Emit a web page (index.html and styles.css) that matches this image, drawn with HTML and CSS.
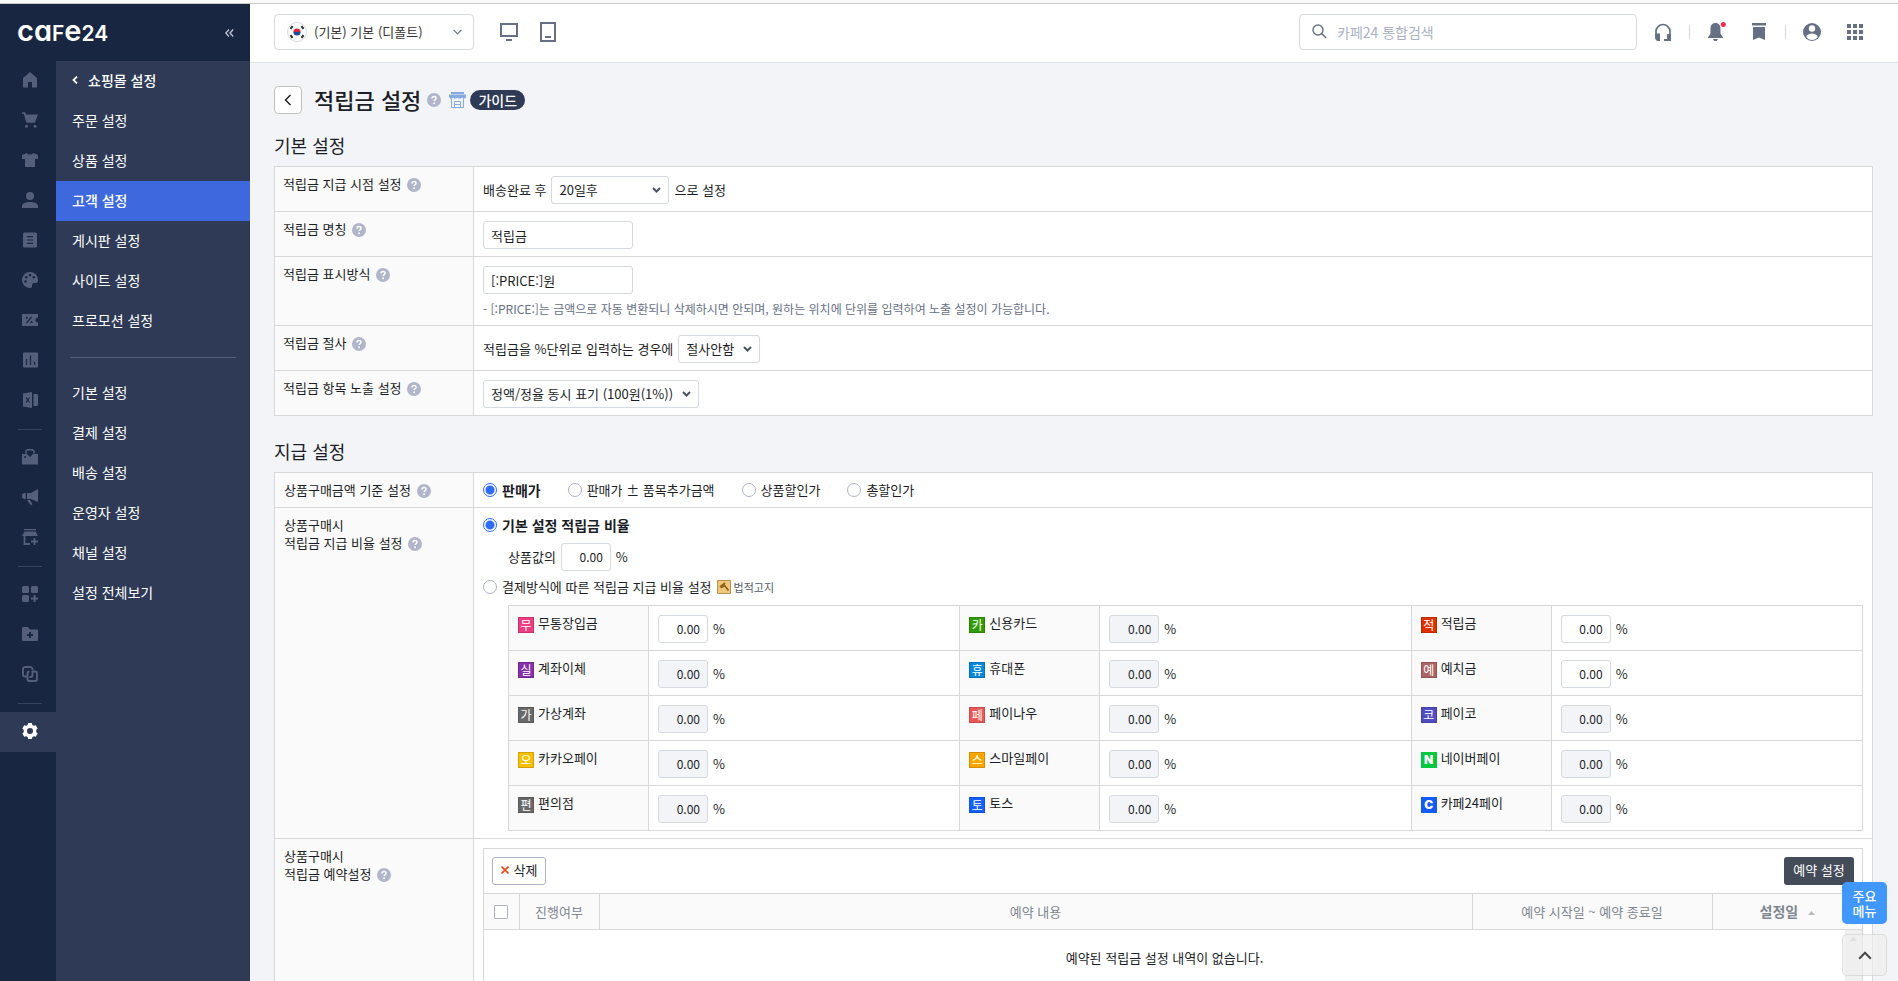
FILE: index.html
```
<!DOCTYPE html>
<html lang="ko">
<head>
<meta charset="utf-8">
<title>적립금 설정</title>
<link rel="stylesheet" href="styles.css">
</head>
<body>
<svg class="sprite" aria-hidden="true">
  <symbol id="help" viewBox="0 0 14 14"><circle cx="7" cy="7" r="7" fill="#b0b5ca"/><path d="M5 5.6C5 4.3 5.9 3.6 7 3.6s2 .7 2 1.8c0 1.3-1.9 1.4-1.9 2.7" fill="none" stroke="#fff" stroke-width="1.5"/><circle cx="7.1" cy="10.3" r=".95" fill="#fff"/></symbol>
</svg>
<div class="shell">
  <aside class="sidebar">
    <div class="brand">
      <a class="logo" href="#">ca<span class="logo-small">F</span>e<span class="logo-small">24</span></a>
      <button class="collapse" aria-label="메뉴 접기"><svg width="9" height="8" viewBox="0 0 9 8"><path d="M4 .5.8 4 4 7.500M8.200.5 5 4l3.200 3.500" fill="none" stroke="#c3c9d6" stroke-width="1.300"/></svg></button>
    </div>
    <div class="side-body">
      <nav class="rail" aria-label="주 메뉴">
        <a href="#" aria-label="홈"><svg viewBox="0 0 16 16"><path d="M8 0 1 6v9.500h5V10h4v5.500h5V6z"/></svg></a>
        <a href="#" aria-label="주문"><svg viewBox="0 0 16 16"><path d="M0 .3h3.200l.9 2.200H16L13.200 10l-.6.800H4.800L4 9.500 1.800 1.800H0z"/><circle cx="4.500" cy="14.300" r="1.500"/><circle cx="13" cy="14.300" r="1.500"/></svg></a>
        <a href="#" aria-label="상품"><svg viewBox="0 0 16 16"><path d="M5 1c.5 2 5.500 2 6 0l5 2v4h-3v8H3V7H0V3z"/></svg></a>
        <a href="#" aria-label="고객"><svg viewBox="0 0 16 16"><circle cx="8" cy="4" r="4"/><path d="M0 16v-2c0-5.300 16-5.300 16 0v2z"/></svg></a>
        <a href="#" aria-label="게시판"><svg viewBox="0 0 16 16"><path fill-rule="evenodd" d="M2.500.5h11A1.500 1.500 0 0 1 15 2v12a1.500 1.500 0 0 1-1.500 1.500h-11A1.500 1.500 0 0 1 1 14V2A1.500 1.500 0 0 1 2.500.5zM5 4v1.200h6V4zm0 3.400v1.200h6V7.400zm0 3.400V12h6v-1.200z"/></svg></a>
        <a href="#" aria-label="디자인"><svg viewBox="0 0 16 16"><path d="M8 0a8 8 0 1 0 0 16c1.500 0 2.200-1 2-2.300-.2-1.700.6-2.700 2.300-2.700H14c1.300 0 2-1.200 2-3A8 8 0 0 0 8 0z"/><g class="cut"><circle cx="3.500" cy="9.500" r="1.300"/><circle cx="4.300" cy="5.200" r="1.300"/><circle cx="8" cy="3.100" r="1.300"/><circle cx="11.800" cy="5.200" r="1.300"/></g></svg></a>
        <a href="#" aria-label="프로모션"><svg viewBox="0 0 16 16"><path d="M0 2h16v3.500a2.500 2.500 0 0 0 0 5V14H0z"/><path class="cut-line" d="m4.500 11 5-6"/><g class="cut"><circle cx="4.800" cy="5.800" r="1.100"/><circle cx="9.500" cy="10.200" r="1.100"/></g></svg></a>
        <a href="#" aria-label="통계"><svg viewBox="0 0 16 16"><rect x="1" y=".5" width="15" height="15" rx="1"/><path class="cut-line" d="M4.500 7v6M8.500 3.500V13M12.500 9.500V13"/></svg></a>
        <a href="#" aria-label="엑셀"><svg viewBox="0 0 16 16"><path d="M1 1.500 10 0v16l-9-1.500zM11.500 2H15l1 1v10l-1 1h-3.500z"/><path class="cut-line" d="m4 5.500 3.500 5m0-5L4 10.500"/></svg></a>
        <hr>
        <a href="#" aria-label="앱"><svg viewBox="0 0 16 16"><path d="M0 5h5l3 3 3-3h5v10.500H0z"/><path d="M4 4.500V2l1.500-1.300h5L12 2v2.500" fill="none" stroke="#565f79" stroke-width="1.500"/><circle class="cut" cx="3" cy="8" r="1"/></svg></a>
        <a href="#" aria-label="광고"><svg viewBox="0 0 16 16"><path d="M16 0v13L9 10H5V4h4zM3.800 4v6H2L0 8.500v-3L2 4zM5 11h3l2.500 4.500-2 .5z"/></svg></a>
        <a href="#" aria-label="채널"><svg viewBox="0 0 16 16"><path d="M2 0h12v1.200H2zM2.500 2.500h11L16 7H0z"/><path d="M2.500 7v8H8M12.500 9v7M9 12.500h7" fill="none" stroke="#565f79" stroke-width="1.800"/></svg></a>
        <hr>
        <a href="#" aria-label="부가서비스"><svg viewBox="0 0 16 16"><rect width="7" height="7" rx="1.500"/><rect x="9" width="7" height="7" rx="1.500"/><rect y="9" width="7" height="7" rx="1.500"/><path d="M11.600 9h2v2.500H16v2h-2.400V16h-2v-2.500H9v-2h2.600z"/></svg></a>
        <a href="#" aria-label="폴더"><svg viewBox="0 0 16 16"><path d="M0 2.500C0 1.500.5 1 1.500 1H6l2 2.500h6.500c1 0 1.500.5 1.500 1.500v8.500c0 1-.5 1.500-1.500 1.500h-13C.5 15 0 14.500 0 13.500z"/><path class="cut-line thick" d="M8 6v6M5 9h6"/></svg></a>
        <a href="#" aria-label="연동"><svg viewBox="0 0 16 16"><g fill="none" stroke="#565f79" stroke-width="1.900"><path d="M10.500 4.500V3A2 2 0 0 0 8.500 1H3a2 2 0 0 0-2 2v5.500a2 2 0 0 0 2 2h2"/><path d="M10.500 5v4a2 2 0 0 1-2 2H7.500M5.500 11v2a2 2 0 0 0 2 2H13a2 2 0 0 0 2-2V7.500a2 2 0 0 0-2-2h-2M5.500 11V7.500a2 2 0 0 1 2-2"/></g></svg></a>
        <hr>
        <a href="#" class="on" aria-label="설정"><svg viewBox="0 0 16 16"><path fill-rule="evenodd" d="M6.200 0h3.600l.6 2 1.400.8 2-.5 1.800 3.100L14.200 7v2l1.400 1.600-1.800 3.100-2-.5-1.400.8-.6 2H6.200l-.6-2-1.400-.8-2 .5-1.800-3.100L1.800 9V7L.4 5.400l1.800-3.100 2 .5L5.600 2zM8 5a3 3 0 1 0 0 6 3 3 0 0 0 0-6z"/></svg></a>
      </nav>
      <nav class="submenu" aria-label="쇼핑몰 설정">
        <a class="parent" href="#"><svg width="6" height="8" viewBox="0 0 6 8"><path d="M5 .6 1.500 4 5 7.400" fill="none" stroke="#fff" stroke-width="1.800"/></svg>쇼핑몰 설정</a>
        <a href="#">주문 설정</a>
        <a href="#">상품 설정</a>
        <a class="on" href="#">고객 설정</a>
        <a href="#">게시판 설정</a>
        <a href="#">사이트 설정</a>
        <a href="#">프로모션 설정</a>
        <hr>
        <a href="#">기본 설정</a>
        <a href="#">결제 설정</a>
        <a href="#">배송 설정</a>
        <a href="#">운영자 설정</a>
        <a href="#">채널 설정</a>
        <a href="#">설정 전체보기</a>
      </nav>
    </div>
  </aside>

  <div class="page">
    <header class="topbar">
      <button class="mall"><svg width="20" height="20" viewBox="0 0 20 20"><circle cx="10" cy="10" r="9.500" fill="#fff" stroke="#d6dae1"/><path d="M6.400 10a3.600 3.600 0 0 1 7.200 0z" fill="#d7263d"/><path d="M6.400 10a3.600 3.600 0 0 0 7.200 0z" fill="#1d4da1"/><path d="m3.500 6.800 2-2.600m9 0 2 2.600m-13 6.400 2 2.600m9 0 2-2.600" stroke="#333" stroke-width="2.200"/></svg><span>(기본) 기본 (디폴트)</span><svg class="caret" width="9" height="6" viewBox="0 0 9 6"><path d="m.6.8 3.900 4 3.900-4" fill="none" stroke="#667084" stroke-width="1.200"/></svg></button>
      <button class="icon" aria-label="PC"><svg width="18" height="18" viewBox="0 0 18 18"><path d="M1 1h16v12H1z" fill="none" stroke="#667084" stroke-width="2"/><path d="M6 16h6v2H6z" fill="#667084"/></svg></button>
      <button class="icon" aria-label="모바일"><svg width="16" height="20" viewBox="0 0 16 20"><path d="M1 1h14v18H1z" fill="none" stroke="#667084" stroke-width="2"/><path d="M5 14h6v2H5z" fill="#667084"/></svg></button>
      <label class="search"><svg width="15" height="15" viewBox="0 0 15 15"><circle cx="6" cy="6" r="5" fill="none" stroke="#667084" stroke-width="1.400"/><path d="m9.600 9.600 4.600 4.400" stroke="#667084" stroke-width="1.500"/></svg><input type="text" placeholder="카페24 통합검색" aria-label="카페24 통합검색"></label>
      <div class="tools">
        <button aria-label="고객센터"><svg width="18" height="18" viewBox="0 0 18 18"><path d="M2 15V8.500a7 7 0 0 1 14 0V17h-4" fill="none" stroke="#667084" stroke-width="1.700"/><path d="M1.200 10.500H6V18H3l-1.800-2zM13 11h3.800v7H10v-2h3z" fill="#667084"/></svg></button>
        <i></i>
        <button aria-label="알림"><svg width="19" height="19" viewBox="0 0 19 19"><path d="M8.500 1C12 1 13.500 3.500 13.500 7v4.500l2.500 4V16H1v-.5l2.500-4V7c0-3.500 1.500-6 5-6zM6 17h5l-1.200 2H7.200z" fill="#667084"/><circle cx="16.300" cy="2.500" r="2.500" fill="#f5264f"/></svg></button>
        <button aria-label="즐겨찾기"><svg width="14" height="17" viewBox="0 0 14 17"><path d="M0 0h14v2.500H0zM1 4h12v13l-6-2.500L1 17z" fill="#667084"/></svg></button>
        <i></i>
        <button aria-label="내 계정"><svg width="18" height="18" viewBox="0 0 18 18"><circle cx="9" cy="9" r="9" fill="#667084"/><circle cx="9" cy="5.500" r="3.200" fill="#fff"/><path d="M3.200 14c1-4.800 10.600-4.800 11.600 0-2.500 4-9 4-11.600 0z" fill="#fff"/></svg></button>
        <button aria-label="전체 서비스"><svg width="16" height="16" viewBox="0 0 16 16"><path d="M0 0h4v4H0zM6 0h4v4H6zM12 0h4v4h-4zM0 6h4v4H0zM6 6h4v4H6zM12 6h4v4h-4zM0 12h4v4H0zM6 12h4v4H6zM12 12h4v4h-4z" fill="#667084"/></svg></button>
      </div>
    </header>

    <main class="content">
      <div class="title-row">
        <button class="back" aria-label="뒤로"><svg width="8" height="12" viewBox="0 0 8 12"><path d="M6.500 1 1.500 6l5 5" fill="none" stroke="#222" stroke-width="1.500"/></svg></button>
        <h1>적립금 설정</h1>
        <svg class="help" role="img" aria-label="도움말"><use href="#help"/></svg>
        <svg class="store" width="17" height="16" viewBox="0 0 17 16"><path d="M2 0h13v2H2zM0 2.500h17V5l-1 1.500h-2l-1-1-1.200 1H9.500l-1-1-1 1H5.200L4 5.500l-1 1H1L0 5z" fill="#85aae2"/><path d="M2.500 6.500v9h12v-9M5.500 15V9.500h6V15M6 12.500h5" fill="none" stroke="#85aae2"/></svg>
        <a class="guide" href="#">가이드</a>
      </div>

      <h2>기본 설정</h2>
      <table class="form basic">
        <tr>
          <th>적립금 지급 시점 설정 <svg class="help"><use href="#help"/></svg></th>
          <td><label class="line">배송완료 후 <select class="w-days"><option>20일후</option></select> 으로 설정</label></td>
        </tr>
        <tr>
          <th><label for="name">적립금 명칭</label> <svg class="help"><use href="#help"/></svg></th>
          <td><div class="line"><input id="name" class="text" type="text" value="적립금"></div></td>
        </tr>
        <tr>
          <th><label for="format">적립금 표시방식</label> <svg class="help"><use href="#help"/></svg></th>
          <td><div class="line"><input id="format" class="text" type="text" value="[:PRICE:]원"></div>
            <p class="note">- [:PRICE:]는 금액으로 자동 변환되니 삭제하시면 안되며, 원하는 위치에 단위를 입력하여 노출 설정이 가능합니다.</p></td>
        </tr>
        <tr>
          <th>적립금 절사 <svg class="help"><use href="#help"/></svg></th>
          <td><label class="line">적립금을 %단위로 입력하는 경우에 <select class="w-cut"><option>절사안함</option></select></label></td>
        </tr>
        <tr>
          <th><label for="expose">적립금 항목 노출 설정</label> <svg class="help"><use href="#help"/></svg></th>
          <td><div class="line"><select id="expose" class="w-expose"><option>정액/정율 동시 표기 (100원(1%))</option></select></div></td>
        </tr>
      </table>

      <h2>지급 설정</h2>
      <table class="form tight">
        <tr>
          <th>상품구매금액 기준 설정 <svg class="help"><use href="#help"/></svg></th>
          <td><div class="radios">
            <label><input type="radio" name="base" checked><b>판매가</b></label>
            <label><input type="radio" name="base">판매가 ± 품목추가금액</label>
            <label><input type="radio" name="base">상품할인가</label>
            <label><input type="radio" name="base">총할인가</label>
          </div></td>
        </tr>
        <tr>
          <th>상품구매시<br>적립금 지급 비율 설정 <svg class="help"><use href="#help"/></svg></th>
          <td>
            <div class="radios"><label><input type="radio" name="rate" checked><b>기본 설정 적립금 비율</b></label></div>
            <label class="line rate">상품값의 <input class="num" type="text" value="0.00"> %</label>
            <div class="radios by-method"><label><input type="radio" name="rate">결제방식에 따른 적립금 지급 비율 설정</label>
              <a class="legal" href="#"><svg width="14" height="14" viewBox="0 0 14 14"><path d="M.5.500h13v13H.5z" fill="#ecc97c" stroke="#b98f4e"/><path d="M3 7 8 3M4 7.800 7.500 5.500l4 5" fill="none" stroke="#95631c" stroke-width="1.800"/></svg>법적고지</a></div>
            <table class="methods">
              <tr>
                <th><span class="method"><em class="c-pink">무</em>무통장입금</span></th><td><label class="line"><input class="num" type="text" value="0.00" aria-label="무통장입금"> %</label></td>
                <th><span class="method"><em class="c-green">카</em>신용카드</span></th><td><label class="line"><input class="num" type="text" value="0.00" aria-label="신용카드" disabled> %</label></td>
                <th><span class="method"><em class="c-red">적</em>적립금</span></th><td><label class="line"><input class="num" type="text" value="0.00" aria-label="적립금"> %</label></td>
              </tr>
              <tr>
                <th><span class="method"><em class="c-purple">실</em>계좌이체</span></th><td><label class="line"><input class="num" type="text" value="0.00" aria-label="계좌이체" disabled> %</label></td>
                <th><span class="method"><em class="c-blue">휴</em>휴대폰</span></th><td><label class="line"><input class="num" type="text" value="0.00" aria-label="휴대폰" disabled> %</label></td>
                <th><span class="method"><em class="c-brown">예</em>예치금</span></th><td><label class="line"><input class="num" type="text" value="0.00" aria-label="예치금"> %</label></td>
              </tr>
              <tr>
                <th><span class="method"><em class="c-gray">가</em>가상계좌</span></th><td><label class="line"><input class="num" type="text" value="0.00" aria-label="가상계좌" disabled> %</label></td>
                <th><span class="method"><em class="c-coral">페</em>페이나우</span></th><td><label class="line"><input class="num" type="text" value="0.00" aria-label="페이나우" disabled> %</label></td>
                <th><span class="method"><em class="c-indigo">코</em>페이코</span></th><td><label class="line"><input class="num" type="text" value="0.00" aria-label="페이코" disabled> %</label></td>
              </tr>
              <tr>
                <th><span class="method"><em class="c-yellow">오</em>카카오페이</span></th><td><label class="line"><input class="num" type="text" value="0.00" aria-label="카카오페이" disabled> %</label></td>
                <th><span class="method"><em class="c-orange">스</em>스마일페이</span></th><td><label class="line"><input class="num" type="text" value="0.00" aria-label="스마일페이" disabled> %</label></td>
                <th><span class="method"><em class="c-naver">N</em>네이버페이</span></th><td><label class="line"><input class="num" type="text" value="0.00" aria-label="네이버페이" disabled> %</label></td>
              </tr>
              <tr>
                <th><span class="method"><em class="c-gray">편</em>편의점</span></th><td><label class="line"><input class="num" type="text" value="0.00" aria-label="편의점" disabled> %</label></td>
                <th><span class="method"><em class="c-toss">토</em>토스</span></th><td><label class="line"><input class="num" type="text" value="0.00" aria-label="토스" disabled> %</label></td>
                <th><span class="method"><em class="c-cafe">C</em>카페24페이</span></th><td><label class="line"><input class="num" type="text" value="0.00" aria-label="카페24페이" disabled> %</label></td>
              </tr>
            </table>
          </td>
        </tr>
        <tr>
          <th>상품구매시<br>적립금 예약설정 <svg class="help"><use href="#help"/></svg></th>
          <td class="reserve-cell">
            <div class="reserve">
              <div class="reserve-bar">
                <button class="delete"><svg width="8" height="8" viewBox="0 0 8 8"><path d="m.5.500 7 7m0-7-7 7" stroke="#ef4a17" stroke-width="1.700"/></svg>삭제</button>
                <button class="primary">예약 설정</button>
              </div>
              <table class="list">
                <thead><tr>
                  <th class="l-check"><input type="checkbox" aria-label="전체 선택"></th>
                  <th class="l-state">진행여부</th>
                  <th>예약 내용</th>
                  <th class="l-period">예약 시작일 ~ 예약 종료일</th>
                  <th class="l-date"><b>설정일</b> <svg width="7" height="4" viewBox="0 0 7 4"><path d="M3.500 0 7 4H0z" fill="#b5b8bd"/></svg></th>
                </tr></thead>
              </table>
              <div class="list-body"><p>예약된 적립금 설정 내역이 없습니다.</p><div class="track"><svg width="7" height="4" viewBox="0 0 7 4"><path d="M3.500 0 7 4H0z" fill="#bbb"/></svg></div></div>
            </div>
          </td>
        </tr>
      </table>
    </main>
  </div>
</div>
<div class="floats">
  <button class="quick">주요<br>메뉴</button>
  <button class="top" aria-label="맨 위로"><svg width="14" height="9" viewBox="0 0 14 9"><path d="m1.200 7.800 5.800-6 5.800 6" fill="none" stroke="#484848" stroke-width="2"/></svg></button>
</div>
</body>
</html>
```

FILE: styles.css
```
* { box-sizing: border-box; }

body {
  margin: 0;
  background: #f3f4f8;
  color: #1b1e26;
  font: 13px/18px "Noto Sans CJK KR", sans-serif;
}

a { color: inherit; text-decoration: none; }
button, input, select { font: inherit; color: inherit; }
button { padding: 0; border: 0; background: none; }
svg { display: block; flex: none; }
hr { border: 0; }
.sprite { width: 0; height: 0; position: absolute; }

.shell {
  display: flex;
  height: 100vh;
  overflow: hidden;
  padding-top: 3px;
  background: linear-gradient(#fafafa 3px, #f3f4f8 3px);
}

/* Sidebar */
.sidebar {
  flex: none;
  width: 250px;
  display: flex;
  flex-direction: column;
  border-top: 1px solid #c8cacd;
  background: #192641;
}
.brand {
  display: flex;
  align-items: center;
  justify-content: space-between;
  height: 57px;
  padding: 0 16px 0 17px;
}
.logo {
  color: #fff;
  font: 600 29px/40px Inter, sans-serif;
  font-feature-settings: "cv11";
}
.logo-small { font-size: 21px; }
.side-body { flex: 1; display: flex; }
.rail { width: 56px; }
.rail a {
  display: flex;
  align-items: center;
  height: 40px;
  padding: 0 0 2px 22px;
}
.rail svg { width: 16px; height: 16px; fill: #565f79; }
.rail hr { width: 24px; height: 1px; margin: 8px 18px; background: #38445d; }
.rail .on { background: #2e3a56; }
.rail .on svg { fill: #fff; }
.rail .cut { fill: #192641; }
.rail .cut-line { stroke: #192641; stroke-width: 1.2; fill: none; }
.rail .thick { stroke-width: 2; }
.submenu {
  flex: 1;
  background: #2e3a56;
  color: #fff;
  font-size: 14px;
}
.submenu a {
  display: flex;
  align-items: center;
  height: 40px;
  padding: 0 0 2px 16px;
}
.submenu .parent { gap: 10px; font-weight: 500; }
.submenu .on { background: #3e69de; font-weight: 500; }
.submenu hr { height: 1px; margin: 16px 14px 15px; background: #566079; }

/* Top bar */
.page { flex: 1; min-width: 0; }
.topbar {
  display: flex;
  align-items: center;
  height: 60px;
  padding: 0 35px 3px 24px;
  border-top: 1px solid #c8cacd;
  border-bottom: 1px solid #e0e5ec;
  background: #fff;
}
.mall {
  display: flex;
  align-items: center;
  gap: 7px;
  width: 200px;
  height: 36px;
  padding: 0 11px 0 12px;
  border: 1px solid #d5d9e1;
  border-radius: 4px;
  color: #333;
}
.mall .caret { margin-left: auto; }
.icon { margin-left: 26px; }
.icon + .icon { margin-left: 22px; }
.search {
  display: flex;
  align-items: center;
  gap: 10px;
  width: 338px;
  height: 36px;
  margin-left: auto;
  padding: 0 12px;
  border: 1px solid #d5d9e1;
  border-radius: 4px;
}
.search input { flex: 1; border: 0; outline: 0; padding: 0; font-size: 14px; }
.search input::placeholder { color: #aab2c4; }
.tools { display: flex; align-items: center; gap: 17px; padding-left: 17px; }
.tools i { width: 1px; height: 14px; background: #d5d9e1; }
.tools button:nth-of-type(3) { padding: 0 2px 0 9px; }
.tools button:last-child { margin-left: 9px; }

/* Page title and section titles */
.content { padding: 23px 25px 0 24px; }
.title-row { display: flex; align-items: center; height: 28px; }
.back {
  display: flex;
  align-items: center;
  justify-content: center;
  width: 28px;
  height: 28px;
  border: 1px solid #bfbfbf;
  border-radius: 4px;
  background: #fff;
}
h1 { margin: 0 6px 2px 12px; font-size: 22px; line-height: 28px; font-weight: 500; }
.help { display: inline-block; width: 14px; height: 14px; margin-left: 2px; vertical-align: -3px; }
.title-row .help { margin-left: 0; }
.store { margin: 0 4px 0 8px; }
.guide {
  padding: 0 8px;
  border-radius: 10px;
  background: #2e3a56;
  color: #fff;
  font-size: 14px;
  line-height: 20px;
  font-weight: 500;
}
h2 { margin: 19px 0 9px; font-size: 18px; line-height: 24px; font-weight: 400; }
.form + h2 { margin-top: 23px; }

/* Settings tables */
table { width: 100%; border-collapse: collapse; table-layout: fixed; background: #fff; }
th, td {
  padding: 9px 9px 7px;
  border: 1px solid #d6d8da;
  vertical-align: top;
  text-align: left;
  font-weight: 400;
}
th { padding-top: 8px; background: #fafafa; }
.basic th { padding-left: 8px; }
.form > tbody > tr > th { width: 199px; }
.tight > tbody > tr > th, .tight > tbody > tr > td { padding-top: 8px; }
.tight > tbody > tr:first-child > td { padding-bottom: 8px; }
.line { display: flex; align-items: center; gap: 5px; }
.note { margin: 6px 0 0; color: #667084; font-size: 12px; line-height: 18px; }

.text, .num, select {
  height: 28px;
  padding: 0 7px;
  border: 1px solid #d5d9e1;
  border-radius: 3px;
  background-color: #fff;
}
.text { width: 150px; }
.num { width: 50px; padding-bottom: 2px; text-align: right; font-size: 12px; }
.num:disabled { background: #f3f4f8; color: #1b1e26; }
select {
  appearance: none;
  background-image: url("data:image/svg+xml,%3Csvg xmlns='http://www.w3.org/2000/svg' width='9' height='6'%3E%3Cpath d='M1 1l3.500 3.500L8 1' fill='none' stroke='%23495164' stroke-width='2'/%3E%3C/svg%3E");
  background-repeat: no-repeat;
  background-position: right 7px center;
}
.w-days { width: 118px; }
.w-cut { width: 82px; }
.w-expose { width: 216px; }

.radios { display: flex; align-items: center; gap: 27px; height: 18px; }
.radios label { display: flex; align-items: center; gap: 5px; }
.radios b { font-size: 14px; font-weight: 700; }
input[type="radio"], input[type="checkbox"] {
  appearance: none;
  width: 14px;
  height: 14px;
  margin: 0;
  border: 1px solid #adb2c8;
  border-radius: 50%;
  background: #fff;
}
input[type="radio"]:checked { border-color: #2f6bf5; background: radial-gradient(#2f6bf5 4px, #fff 5px); }
.rate { margin: 9px 0 7px 25px; }
.radios.by-method { gap: 5px; }
.legal { display: flex; align-items: center; gap: 3px; color: #555b66; font-size: 11px; }

/* Payment methods */
.methods { width: auto; min-width: calc(100% - 25px); margin: 9px 0 0 25px; }
.methods th { width: 140px; }
.methods td { height: 45px; }
.method { display: flex; align-items: flex-start; gap: 4px; }
.method em {
  width: 16px;
  height: 16px;
  margin-top: 3px;
  border: 1px solid rgba(0, 0, 0, .15);
  color: #fff;
  font-style: normal;
  font-size: 12px;
  line-height: 14px;
  text-align: center;
}
.method .c-naver, .method .c-cafe { font: 900 12px/14px Inter, sans-serif; border-color: transparent; }
.c-pink { background: #ee3c83; }
.c-green { background: #339a04; }
.c-red { background: #e03200; }
.c-purple { background: #8431ab; }
.c-blue { background: #0786dd; }
.c-brown { background: #ad6464; }
.c-gray { background: #696969; }
.c-coral { background: #e95757; }
.c-indigo { background: #514cc1; }
.c-yellow { background: #f8c004; }
.c-orange { background: #f9a600; }
.c-naver { background: #04c840; }
.c-toss { background: #1560ff; }
.c-cafe { background: #125bf5; }

/* Scheduled settings */
.tight > tbody > tr > .reserve-cell { padding-top: 9px; }
.reserve { border: 1px solid #d6d8da; }
.reserve-bar { display: flex; justify-content: space-between; padding: 8px; }
.delete, .primary {
  display: flex;
  align-items: center;
  justify-content: center;
  gap: 5px;
  height: 28px;
  padding-bottom: 2px;
  border-radius: 3px;
}
.delete { width: 54px; border: 1px solid #adb2c8; background: #fff; }
.primary { width: 70px; background: #454c59; color: #fff; }
.list th { height: 35px; padding: 8px 4px; color: #80868f; text-align: center; vertical-align: middle; line-height: 18px; }
.list th:first-child { border-left: 0; }
.list th:last-child { border-right: 0; }
.l-check { width: 35px; }
.l-state { width: 80px; }
.l-period { width: 240px; }
.l-date { width: 150px; }
.l-date b { font-size: 14px; font-weight: 700; }
.l-date svg { display: inline-block; margin-left: 6px; vertical-align: 2px; }
input[type="checkbox"] { display: block; margin: 0 auto; border-radius: 1px; }
.list-body { display: flex; height: 200px; }
.list-body p { flex: 1; margin: 19px 0; text-align: center; }
.track { width: 17px; padding: 7px 5px; background: #f0f0f0; }

/* Floating buttons */
.floats {
  position: fixed;
  right: 11px;
  bottom: 5px;
  display: grid;
  gap: 10px;
}
.quick, .top { width: 45px; height: 42px; border-radius: 5px; }
.quick { background: #3f97ff; color: #fff; font-weight: 500; line-height: 15px; }
.top {
  display: flex;
  align-items: center;
  justify-content: center;
  border: 1px solid rgba(0, 0, 0, .08);
  background: rgba(238, 238, 238, .7);
}
```
